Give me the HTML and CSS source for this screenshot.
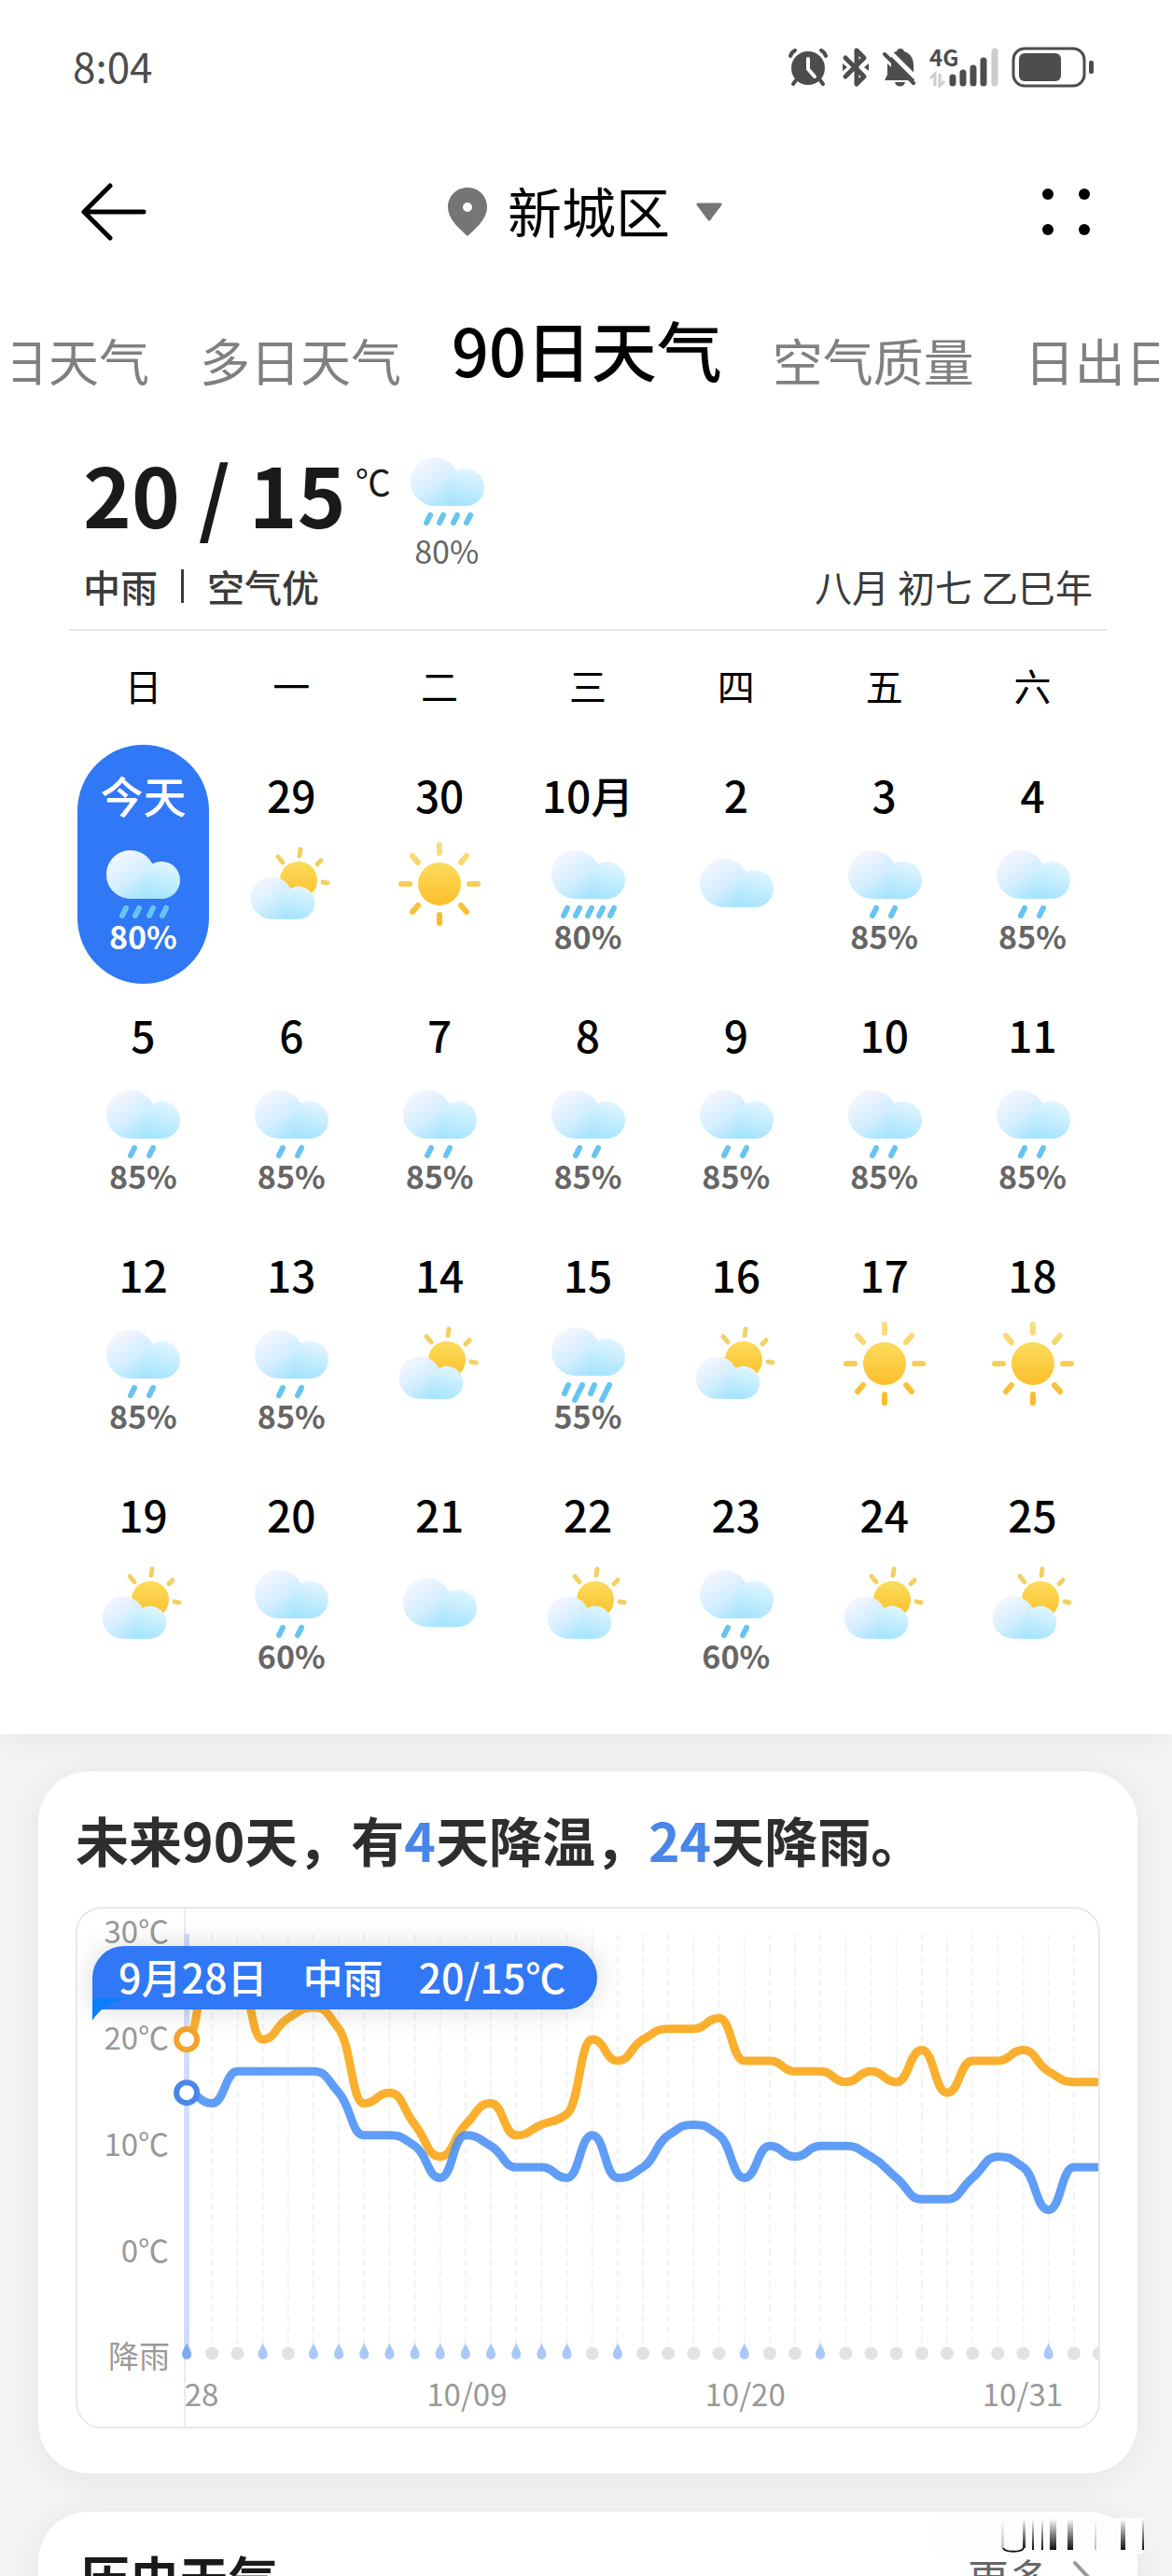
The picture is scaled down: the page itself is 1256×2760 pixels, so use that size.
FILE: index.html
```
<!DOCTYPE html>
<html lang="zh-CN">
<head>
    <meta charset="utf-8">
    <title>90日天气</title>
    <link rel="stylesheet" href="styles.css">
</head>
<body>
    <!-- shared weather icons -->
    <svg class="sprite" aria-hidden="true">
        <defs>
            <linearGradient id="g_cloud" gradientUnits="userSpaceOnUse" x1="24" y1="22" x2="54" y2="68">
                <stop offset="0" stop-color="#f2f5ff"/><stop offset="0.5" stop-color="#d2eeff"/><stop offset="1" stop-color="#a0e2ff"/>
            </linearGradient>
            <linearGradient id="g_puff" gradientUnits="userSpaceOnUse" x1="76" y1="27" x2="66" y2="67">
                <stop offset="0" stop-color="#e2f6ff"/><stop offset="1" stop-color="#a6e4ff"/>
            </linearGradient>
            <linearGradient id="g_sun" x1="0" y1="0" x2="0" y2="1">
                <stop offset="0" stop-color="#fbdc5c"/><stop offset="1" stop-color="#fcbf2b"/>
            </linearGradient>
            <linearGradient id="g_rays" gradientUnits="userSpaceOnUse" x1="0" y1="6" x2="0" y2="96">
                <stop offset="0" stop-color="#f7e184"/><stop offset="1" stop-color="#f9b928"/>
            </linearGradient>
        </defs>
        <symbol id="i_cloudbody" viewBox="0 0 100 90" overflow="visible">
            <path d="M37 67A26 26 0 1 1 60 29L70 40V67Z" fill="url(#g_cloud)"/>
            <path d="M70 67A20 20 0 1 0 50 47C50 55 51 61 54 67Z" fill="url(#g_puff)"/>
        </symbol>
        <symbol id="i_cloud" viewBox="0 0 100 90" overflow="visible">
            <use href="#i_cloudbody" width="100" height="90" y="9"/>
        </symbol>
        <symbol id="i_light" viewBox="0 0 100 90" overflow="visible">
            <use href="#i_cloudbody" width="100" height="90"/>
            <path class="drops" d="M41 77L37 85M61 77L57 85"/>
        </symbol>
        <symbol id="i_moderate" viewBox="0 0 100 90" overflow="visible">
            <use href="#i_cloudbody" width="100" height="90"/>
            <path class="drops" d="M32 77L28 85M46 77L42 85M61 77L57 85M75 77L71 85"/>
        </symbol>
        <symbol id="i_heavy" viewBox="0 0 100 90" overflow="visible">
            <use href="#i_cloudbody" width="100" height="90"/>
            <path class="drops" d="M28 77L24 85M41 77L37 85M54 77L50 85M66 77L62 85M78 77L74 85"/>
        </symbol>
        <symbol id="i_storm" viewBox="0 0 100 90" overflow="visible">
            <use href="#i_cloudbody" width="100" height="90" y="-3"/>
            <path class="drops" d="M29 74L25 83M44 74L36 90M57 74L53 83M73 74L65 90"/>
        </symbol>
        <symbol id="i_sunny" viewBox="0 0 100 90" overflow="visible">
            <circle cx="50" cy="51" r="23" fill="url(#g_sun)"/>
            <path d="M50 9V18M50 84V93M9 51H18M82 51H91M21 21L27 28M79 21L73 28M21 81L27 74M79 81L73 74" stroke="url(#g_rays)" stroke-width="6" stroke-linecap="round"/>
        </symbol>
        <symbol id="i_partly" viewBox="0 0 100 90" overflow="visible">
            <circle cx="58" cy="47" r="20" fill="url(#g_sun)"/>
            <path d="M60 14L59 21M36 22L41 28M82 26L78 30M84 49L89 50" stroke="#f3d062" stroke-width="5" stroke-linecap="round"/>
            <use href="#i_cloudbody" width="87" height="79" x="-3" y="30"/>
        </symbol>
    </svg>

    <div class="app">
        <section class="top">
            <div class="statusbar">
                <span class="clock">8:04</span>
                <div class="status_icons">
                    <svg width="44" height="44" viewBox="0 0 44 44">
                        <circle cx="22" cy="23" r="18" fill="#4d4d4d"/>
                        <path d="M3 10C4 7 6 5 8 4M41 10C40 7 38 5 36 4M9 36L6 40M35 36L38 40" fill="none" stroke="#4d4d4d" stroke-width="4" stroke-linecap="round"/>
                        <path d="M22 13V24L29 32" fill="none" stroke="#fff" stroke-width="4" stroke-linecap="round" stroke-linejoin="round"/>
                    </svg>
                    <svg width="30" height="44" viewBox="0 0 30 44">
                        <path d="M4 12L24 32L16 40V4L24 12L4 32" fill="none" stroke="#4d4d4d" stroke-width="5" stroke-linecap="round" stroke-linejoin="round"/>
                        <path d="M1 18L6 22L1 26ZM29 18L24 22L29 26Z" fill="#4d4d4d"/>
                    </svg>
                    <svg width="36" height="44" viewBox="0 0 36 44">
                        <path d="M2 36L5 30V20C5 11 10 6 15 5C16 1 22 1 23 5C29 7 33 12 33 20V30L35 36ZM13 38H24C23 44 14 44 13 38Z" fill="#4d4d4d"/>
                        <path d="M6 4L38 36" stroke="#fff" stroke-width="5"/>
                        <path d="M0 13L9 22V0H0Z" fill="#fff"/>
                        <path d="M2 8L33 39" stroke="#4d4d4d" stroke-width="4" stroke-linecap="round"/>
                    </svg>
                    <svg width="74" height="44" viewBox="0 0 74 44">
                        <text x="0" y="21" class="net">4G</text>
                        <path d="M1 34L6 29V42M11 29V42L16 37" fill="none" stroke="#ccc" stroke-width="3"/>
                        <path d="M25 33V39M36 28V39M47 23V39M58 15V39" stroke="#4d4d4d" stroke-width="7" stroke-linecap="round"/>
                        <path d="M70 5V39" stroke="#ccc" stroke-width="7" stroke-linecap="round"/>
                    </svg>
                    <svg width="88" height="44" viewBox="0 0 88 44">
                        <rect x="2" y="2" width="76" height="40" rx="12" fill="none" stroke="#4d4d4d" stroke-width="3"/>
                        <rect x="8" y="7" width="45" height="30" rx="6" fill="#4d4d4d"/>
                        <rect x="83" y="15" width="5" height="14" rx="2" fill="#4d4d4d"/>
                    </svg>
                </div>
            </div>

            <header class="titlebar">
                <button class="icon_btn" aria-label="返回">
                    <svg width="72" height="66" viewBox="0 0 72 66"><path d="M32 5L4 33L32 61M4 33H68" fill="none" stroke="#000" stroke-width="5" stroke-linecap="round" stroke-linejoin="round"/></svg>
                </button>
                <button class="city">
                    <svg width="42" height="52" viewBox="0 0 42 52"><path fill-rule="evenodd" d="M21 0C9 0 0 9 0 21C0 33 11 43 21 52C31 43 42 33 42 21C42 9 33 0 21 0ZM21 16A5 5 0 1 1 21 26A5 5 0 1 1 21 16Z" fill="#757575"/></svg>
                    <span class="city_name">新城区</span>
                    <svg class="caret" width="28" height="20" viewBox="0 0 28 20"><path d="M2 2H26L14 18Z" fill="#757575" stroke="#757575" stroke-width="3" stroke-linejoin="round"/></svg>
                </button>
                <button class="icon_btn more_btn" aria-label="菜单">
                    <svg width="52" height="52" viewBox="0 0 52 52"><circle cx="7" cy="7" r="6"/><circle cx="46" cy="7" r="6"/><circle cx="7" cy="45" r="6"/><circle cx="46" cy="45" r="6"/></svg>
                </button>
            </header>

            <nav class="tabs">
                <a href="#" class="tab">日天气</a>
                <a href="#" class="tab">多日天气</a>
                <a href="#" class="tab active">90日天气</a>
                <a href="#" class="tab">空气质量</a>
                <a href="#" class="tab">日出日</a>
            </nav>

            <div class="summary">
                <div class="summary_top">
                    <span class="temp">20 / 15</span>
                    <span class="unit">℃</span>
                    <div class="now">
                        <svg class="wicon" viewBox="0 0 100 90"><use href="#i_moderate"/></svg>
                        <span class="now_rain">80%</span>
                    </div>
                </div>
                <div class="summary_bottom">
                    <div class="desc"><span>中雨</span><span class="bar"></span><span>空气优</span></div>
                    <div class="lunar">八月 初七 乙巳年</div>
                </div>
            </div>

            <table class="calendar">
                <thead>
                    <tr><th>日</th><th>一</th><th>二</th><th>三</th><th>四</th><th>五</th><th>六</th></tr>
                </thead>
                <tbody id="days"></tbody>
            </table>
        </section>

        <main class="cards">
            <section class="card">
                <h2 class="headline">未来90天，有<em>4</em>天降温，<em>24</em>天降雨。</h2>
                <div class="chart">
                    <svg id="chart" viewBox="0 0 1093 554"></svg>
                    <div class="tip">
                        <span>9月28日</span><span>中雨</span><span>20/15℃</span>
                        <svg class="tip_tail" width="44" height="24" viewBox="0 0 44 24"><path d="M0 0H44C22 1 9 10 0 24Z" fill="#0a7ffb"/></svg>
                    </div>
                </div>
            </section>

            <section class="card history">
                <h2>历史天气</h2>
                <a href="#" class="more">更多
                    <svg width="20" height="36" viewBox="0 0 20 36"><path d="M3 3L17 18L3 33" fill="none" stroke="#999" stroke-width="4" stroke-linecap="round"/></svg>
                </a>
                <svg class="streaks" width="230" height="40" viewBox="0 0 230 40" aria-hidden="true">
                    <defs>
                        <linearGradient id="g_streak" x1="0" y1="0" x2="0" y2="1"><stop offset="0" stop-color="#000" stop-opacity="0"/><stop offset="1" stop-color="#111"/></linearGradient>
                        <linearGradient id="g_faint" x1="0" y1="0" x2="0" y2="1"><stop offset="0" stop-color="#888" stop-opacity="0"/><stop offset="1" stop-color="#999" stop-opacity="0.6"/></linearGradient>
                    </defs>
                    <rect width="226" height="38" fill="#fdfdfd"/>
                    <path d="M97 2h3v30h-3zM107 2h2v32h-2zM117 2h2v32h-2zM126 1h7v33h-7zM145 1h6v33h-6zM202 1h5v33h-5zM225 2h2v32h-2z" fill="url(#g_streak)"/>
                    <path d="M74 2h3v30h-3zM174 2h2v32h-2z" fill="url(#g_faint)"/>
                    <path d="M76 32C78 37 96 37 98 32" fill="none" stroke="#111" stroke-width="2"/>
                </svg>
            </section>
        </main>
    </div>
    <script src="script.js"></script>
</body>
</html>
```
FILE: styles.css
```
* { box-sizing: border-box; }
body { margin: 0; background-color: #f4f4f4; color: #000; font-family: "Noto Sans CJK SC", sans-serif; }
button { padding: 0; border: 0; background: none; color: inherit; font: inherit; cursor: pointer; }
a { color: inherit; text-decoration: none; }
svg { display: block; flex: none; }
.sprite { position: absolute; width: 0; height: 0; }
.app { height: 100vh; overflow: hidden; }
.top { background-color: #fff; padding: 48px 0 32px; box-shadow: 0 0 40px rgba(0, 0, 0, 0.07); }

/* status bar */
.statusbar { display: flex; justify-content: space-between; align-items: center; height: 48px; padding: 0 84px 0 78px; }
.clock { padding-bottom: 4px; font-size: 44px; line-height: 44px; color: #4d4d4d; }
.status_icons { display: flex; gap: 14px; }
.net { font-size: 24px; font-weight: 700; fill: #4d4d4d; }

/* title bar */
.titlebar { display: grid; grid-template-columns: 1fr auto 1fr; align-items: center; height: 70px; margin-top: 96px; padding: 0 88px 0 86px; }
.icon_btn { justify-self: start; }
.more_btn { justify-self: end; }
.city { display: flex; align-items: center; gap: 22px; }
.city_name { padding-bottom: 4px; font-size: 58px; line-height: 66px; }
.caret { margin-left: 6px; }

/* tabs */
.tabs { display: flex; align-items: flex-end; gap: 54px; margin: 70px 14px 0; overflow: hidden; white-space: nowrap; }
.tab { flex: none; font-size: 54px; line-height: 60px; color: #808080; }
.tab:first-child { margin-left: -16px; }
.tab.active { font-size: 70px; line-height: 84px; color: #000; font-weight: 500; }

/* today */
.summary { margin: 59px 70px 0 74px; padding: 0 15px 26px; border-bottom: 2px solid #e6e6e6; }
.summary_top { display: flex; align-items: flex-start; gap: 10px; }
.temp { margin-top: 8px; font-size: 88px; line-height: 90px; font-weight: 700; color: #1a1a1a; }
.unit { margin-top: 18px; font-size: 38px; line-height: 44px; color: #1a1a1a; }
.now { text-align: center; }
.now_rain { display: block; margin-top: 7px; font-size: 34px; line-height: 36px; color: #666; }
.summary_bottom { display: flex; justify-content: space-between; font-size: 40px; line-height: 40px; color: #3a3a3a; }
.desc { display: flex; align-items: center; gap: 25px; font-weight: 500; }
.bar { width: 3px; height: 36px; background-color: #3a3a3a; }
.wicon { width: 100px; height: 90px; overflow: visible; }
.drops { fill: none; stroke: #66c4f2; stroke-width: 6; stroke-linecap: round; }

/* calendar */
.calendar { width: calc(100% - 144px); margin: 0 70px 0 74px; table-layout: fixed; border-collapse: collapse; }
.calendar th { height: 122px; padding: 0 0 6px; font-size: 40px; line-height: 40px; font-weight: 400; }
.calendar td { height: 257px; padding: 0; vertical-align: top; }
.day { display: flex; flex-direction: column; align-items: center; width: 141px; height: 256px; margin: 0 auto; padding-top: 30px; border-radius: 71px; }
.day_num { margin-bottom: 22px; font-size: 46px; line-height: 46px; font-weight: 500; white-space: nowrap; }
.day_rain { font-size: 34px; line-height: 34px; font-weight: 700; color: #666; }
.today { background-color: #3078f5; color: #fff; }
.today .day_rain { color: #fff; }

/* cards */
.cards { display: flex; flex-direction: column; gap: 41px; padding: 40px 37px 0 41px; }
.card { position: relative; padding: 44px 40px 48px; border-radius: 54px; background-color: #fff; box-shadow: 0 4px 40px rgba(0, 0, 0, 0.07); }
.headline { margin: 0 0 45px; font-size: 57px; line-height: 56px; font-weight: 700; color: #2e2e2e; white-space: nowrap; }
.headline em { font-style: normal; color: #4a86e8; }
.chart { position: relative; border: 2px solid #e8e8e8; border-radius: 28px; overflow: hidden; }
#chart { width: 100%; height: auto; }
.axis { font-size: 33px; fill: #999; }
.tip { position: absolute; left: 16px; top: 40px; display: flex; align-items: center; gap: 38px; height: 68px; padding: 0 34px 4px 28px; border-radius: 34px 34px 34px 0; background-color: #3078f5; color: #fff; font-size: 43px; line-height: 60px; font-weight: 500; box-shadow: 0 0 30px rgba(0, 0, 0, 0.15); white-space: nowrap; }
.tip_tail { position: absolute; left: 0; bottom: -12px; }
.history { display: flex; justify-content: space-between; align-items: flex-start; height: 400px; padding: 42px 50px 0 45px; }
.history h2 { margin: 0; font-size: 53px; line-height: 56px; font-weight: 700; color: #1a1a1a; }
.more { display: flex; align-items: center; gap: 24px; font-size: 44px; line-height: 56px; color: #666; }
.streaks { position: absolute; right: -10px; top: 7px; }
```
FILE: script.js
```
// [label, icon, rain chance]
let days = [
    ["今天", "moderate", 80], ["29", "partly"], ["30", "sunny"], ["10月", "heavy", 80], ["2", "cloud"], ["3", "light", 85], ["4", "light", 85],
    ["5", "light", 85], ["6", "light", 85], ["7", "light", 85], ["8", "light", 85], ["9", "light", 85], ["10", "light", 85], ["11", "light", 85],
    ["12", "light", 85], ["13", "light", 85], ["14", "partly"], ["15", "storm", 55], ["16", "partly"], ["17", "sunny"], ["18", "sunny"],
    ["19", "partly"], ["20", "light", 60], ["21", "cloud"], ["22", "partly"], ["23", "light", 60], ["24", "partly"], ["25", "partly"]
];
let high = [20, 28, 27, 20, 22, 23, 21, 14, 15, 12, 9, 12, 14, 11, 12, 13, 20, 18, 20, 21, 21, 22, 18, 18, 17, 17, 16, 17, 16, 19, 15, 18, 18, 19, 17, 16, 16];
let low = [15, 14, 17, 17, 17, 17, 15, 11, 11, 10, 7, 11, 10, 8, 8, 7, 11, 7, 8, 11, 12, 11, 7, 10, 9, 10, 10, 9, 7, 5, 5, 7, 9, 8, 4, 8, 8];
let rainy = [0, 3, 5, 6, 7, 8, 9, 10, 11, 12, 13, 14, 15, 17, 22, 25, 34];

function show_days() {
    let html = "";
    days.forEach((d, i) => {
        if (i % 7 === 0) html += "<tr>";
        html += `<td><div class="day${i === 0 ? " today" : ""}"><span class="day_num">${d[0]}</span>`;
        html += `<svg class="wicon" viewBox="0 0 100 90"><use href="#i_${d[1]}"/></svg>`;
        if (d[2]) html += `<span class="day_rain">${d[2]}%</span>`;
        html += "</div></td>";
        if (i % 7 === 6) html += "</tr>";
    });
    document.getElementById("days").innerHTML = html;
}

let last = 36;
let step = 977 / last;
let px = i => 117 + i * step;
let py = t => 368 - t * 11.4;

// monotone cubic curve, flat at every peak and dip
function curve(temps) {
    let slope = temps.map((t, i) => {
        if (i === 0 || i === temps.length - 1) return 0;
        let a = t - temps[i - 1], b = temps[i + 1] - t;
        return a * b <= 0 ? 0 : 2 * a * b / (a + b);
    });
    let path = `M${px(0)} ${py(temps[0])}`;
    for (let i = 1; i < temps.length; i++) {
        path += `C${px(i - 1) + step / 2} ${py(temps[i - 1] + slope[i - 1] / 2)} ${px(i) - step / 2} ${py(temps[i] - slope[i] / 2)} ${px(i)} ${py(temps[i])}`;
    }
    return path;
}

function show_chart() {
    let s = `<path d="M115 0V554" stroke="#ececf0" stroke-width="2"/>`;
    for (let i = 1; i < last; i++) {
        s += `<path d="M${px(i)} 27V466" stroke="#f3f3f3" stroke-width="2" stroke-dasharray="8 4"/>`;
    }
    s += `<path d="M117 27V472" stroke="#d0def8" stroke-width="6"/>`;
    for (let i = 0; i <= last; i++) {
        if (rainy.includes(i)) {
            s += `<path transform="translate(${px(i)} 465)" d="M0 0C2 5 5 8 5 12C5 19 -5 19 -5 12C-5 8 -2 5 0 0Z" fill="${i === 0 ? "#7fa9f2" : "#a9c8f7"}"/>`;
        } else {
            s += `<circle cx="${px(i)}" cy="476" r="7" fill="#e2e2e2"/>`;
        }
    }
    s += `<path d="${curve(high)}" fill="none" stroke="#fab02e" stroke-width="9"/>`;
    s += `<path d="${curve(low)}" fill="none" stroke="#4a8ff5" stroke-opacity="0.88" stroke-width="9"/>`;
    s += `<circle cx="117" cy="${py(20)}" r="11" fill="#fff" stroke="#f2a32c" stroke-width="6"/>`;
    s += `<circle cx="117" cy="${py(15)}" r="11" fill="#fff" stroke="#4a86e8" stroke-width="6"/>`;
    [30, 20, 10, 0].forEach(t => {
        s += `<text class="axis" x="98" y="${py(t) + 11}" text-anchor="end">${t}℃</text>`;
    });
    s += `<text class="axis" x="99" y="492" text-anchor="end">降雨</text>`;
    [[133, "28"], [417, "10/09"], [715, "10/20"], [1012, "10/31"]].forEach(d => {
        s += `<text class="axis" x="${d[0]}" y="533" text-anchor="middle">${d[1]}</text>`;
    });
    document.getElementById("chart").innerHTML = s;
}

show_days();
show_chart();
```
